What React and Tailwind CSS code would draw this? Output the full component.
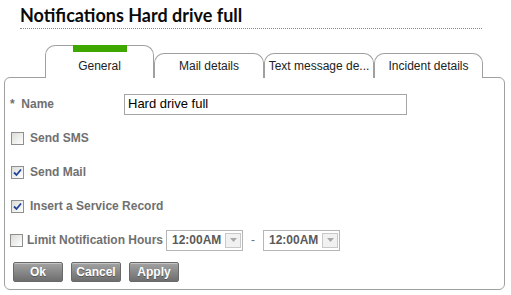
import { useState } from 'react';

const Checkbox = ({ checked }) => (
  <span className="w-[13px] h-[13px] border border-[#8e8f8f] bg-gradient-to-br from-[#dcdcd7] to-[#ffffff] flex items-center justify-center shrink-0">
    {checked && (
      <svg width="9" height="9" viewBox="0 0 9 9">
        <path d="M1 4.5 L3.5 7 L8 1.5" fill="none" stroke="#21449c" strokeWidth="1.8" />
      </svg>
    )}
  </span>
);

const TimeSelect = () => (
  <div className="w-[77px] h-[21px] border border-[#b5b5b5] bg-white flex items-center justify-between pl-[5px] pr-[1px]">
    <span className="text-[12px] font-bold text-[#5a5a5a]">12:00AM</span>
    <span className="w-[16px] h-[15px] border border-[#c8c8c8] bg-[#f1f1f1] flex items-center justify-center">
      <svg width="7" height="4" viewBox="0 0 7 4">
        <path d="M0 0 L7 0 L3.5 4 Z" fill="#a8a8a8" />
      </svg>
    </span>
  </div>
);

const Button = ({ label }) => (
  <button className="w-[50px] h-[20px] rounded-[2px] border border-[#6a6a6a] bg-gradient-to-b from-[#a3a3a3] to-[#6e6e6e] text-white text-[12px] font-bold shadow-[inset_0_1px_0_#c4c4c4] [text-shadow:0_1px_0_#555]">
    {label}
  </button>
);

const App = () => {
  const [tab] = useState('General');
  const tabs = [
    { name: 'General', w: 'w-[109px]' },
    { name: 'Mail details', w: 'w-[110px]' },
    { name: 'Text message de...', w: 'w-[110px]' },
    { name: 'Incident details', w: 'w-[109px]' },
  ];

  return (
    <div className="w-[511px] h-[295px] bg-white font-['Liberation_Sans',Arial,sans-serif] relative overflow-hidden">
      {/* Header */}
      <div className="pt-[5px] px-[20px] mr-[9px]">
        <h1 className="font-['Lato',sans-serif] font-bold text-[18px] leading-[21px] text-[#0a0a0a]">
          Notifications Hard drive full
        </h1>
        <div className="mt-[2px] border-b border-dotted border-[#8a8a8a]" />
      </div>

      {/* Tabs */}
      <div className="flex items-end pl-[45px] mt-[16px] h-[33px] relative z-10">
        {tabs.map((t) => (
          t.name === tab ? (
            <div key={t.name} className={`relative ${t.w} h-[33px] border border-b-0 border-[#a0a0a0] rounded-t-[10px] bg-white flex justify-center pt-[13px]`}>
              <span className="absolute top-[-1px] left-[27px] w-[54px] h-[7px] bg-[#3fa800]" />
              <span className="text-[12px] text-[#222] leading-[14px]">{t.name}</span>
            </div>
          ) : (
            <div key={t.name} className={`${t.w} h-[25px] border border-b-0 border-[#a0a0a0] rounded-t-[10px] bg-white flex justify-center pt-[5px] whitespace-nowrap`}>
              <span className="text-[12px] text-[#222] leading-[14px]">{t.name}</span>
            </div>
          )
        ))}
      </div>

      {/* Panel */}
      <div className="ml-[4px] mr-[6px] -mt-px border border-[#a0a0a0] rounded-[6px] pt-[9px] pb-[7px] pl-[5px]">
        <div className="flex items-center h-[34px]">
          <span className="w-[114px] text-[12px] font-bold text-[#707070]">* &nbsp;Name</span>
          <div className="w-[283px] h-[21px] border border-[#a5a5a5] flex items-center pl-[3px] text-[13px] text-black">
            Hard drive full
          </div>
        </div>
        <div className="flex items-center h-[34px] gap-[6px] pl-[1px]">
          <Checkbox />
          <span className="text-[12px] font-bold text-[#707070]">Send SMS</span>
        </div>
        <div className="flex items-center h-[34px] gap-[6px] pl-[1px]">
          <Checkbox checked />
          <span className="text-[12px] font-bold text-[#707070]">Send Mail</span>
        </div>
        <div className="flex items-center h-[34px] gap-[6px] pl-[1px]">
          <Checkbox checked />
          <span className="text-[12px] font-bold text-[#707070]">Insert a Service Record</span>
        </div>
        <div className="flex items-center h-[34px]">
          <Checkbox />
          <span className="ml-[4px] w-[139px] text-[12px] font-bold text-[#707070]">Limit Notification Hours</span>
          <TimeSelect />
          <span className="w-[20px] text-center text-[12px] text-[#707070]">-</span>
          <TimeSelect />
        </div>
        <div className="flex gap-[8px] mt-[5px] pl-[3px]">
          <Button label="Ok" />
          <Button label="Cancel" />
          <Button label="Apply" />
        </div>
      </div>
    </div>
  );
};

export default App;
